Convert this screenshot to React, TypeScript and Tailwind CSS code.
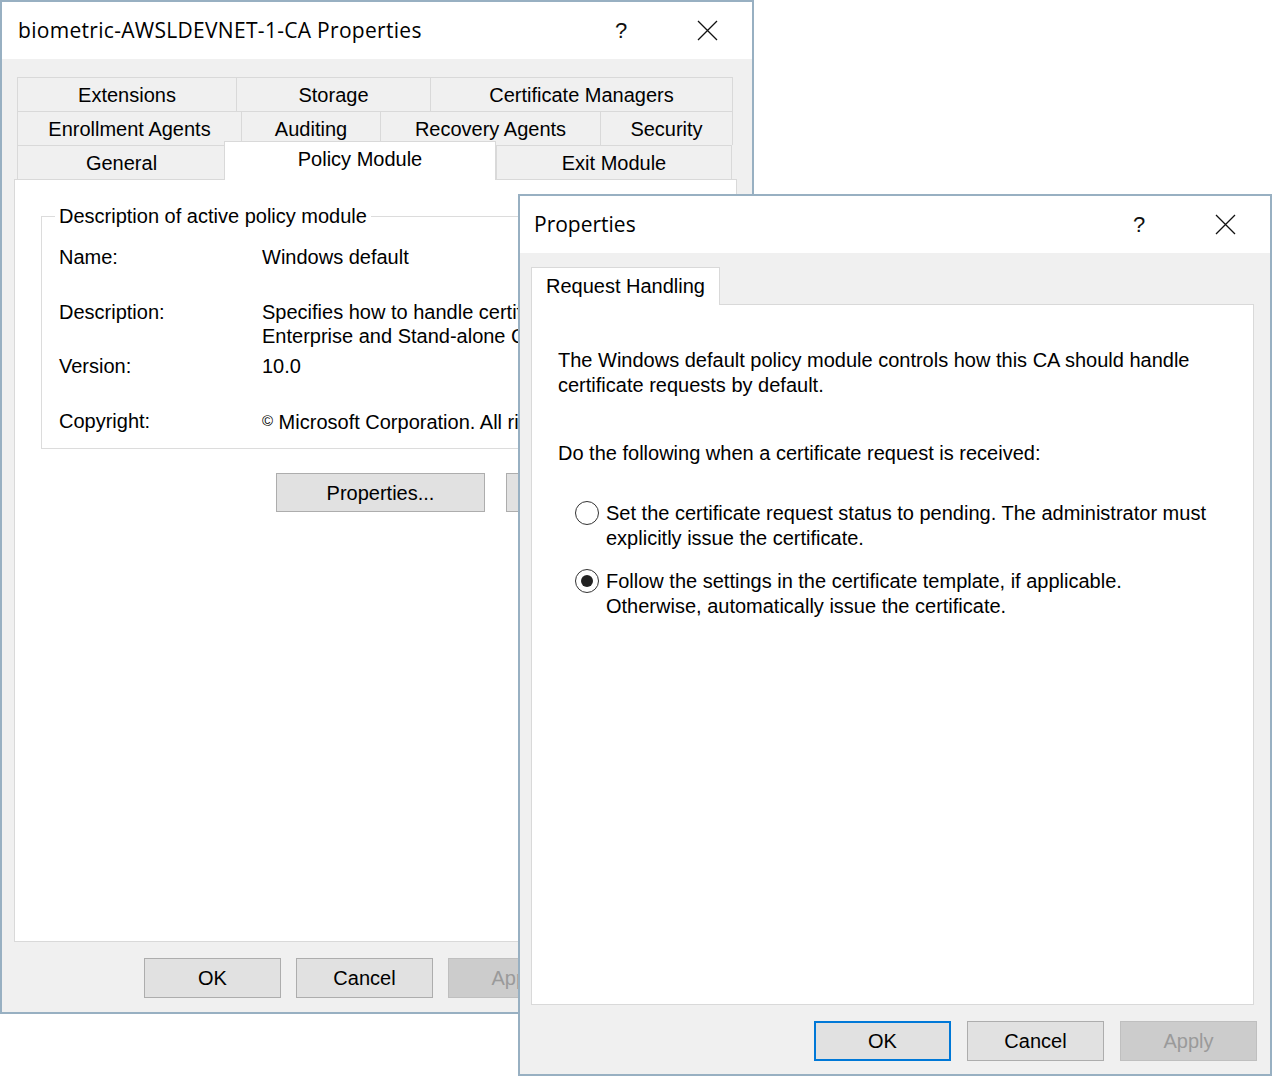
import React from 'react';

const ui = "font-['Liberation_Sans',Arial,sans-serif] text-[20px] text-black";
const titleFont = "font-['Open_Sans','Noto_Sans',sans-serif] text-[21px] text-black";

function CaptionButtons() {
  return (
    <div className="flex h-full pr-[2px]">
      <div className="w-[86px] flex items-center justify-center">
        <span className="font-['Liberation_Sans',sans-serif] text-[22px] font-light text-[#111]">?</span>
      </div>
      <div className="w-[86px] flex items-center justify-center">
        <svg width="21" height="21" viewBox="0 0 21 21">
          <path d="M1 1 L20 20 M20 1 L1 20" stroke="#111" strokeWidth="1.3" fill="none" />
        </svg>
      </div>
    </div>
  );
}

function TitleBar({ title, height, pad }: { title: string; height: string; pad: string }) {
  return (
    <div className={`${height} bg-white flex items-center justify-between shrink-0`}>
      <span className={`${titleFont} ${pad}`}>{title}</span>
      <CaptionButtons />
    </div>
  );
}

function Button({ label, variant = 'normal' }: { label: string; variant?: 'normal' | 'default' | 'disabled' }) {
  const styles = {
    normal: 'border border-[#adadad] bg-[#e1e1e1] text-black',
    default: 'border-2 border-[#0078d7] bg-[#e1e1e1] text-black',
    disabled: 'border border-[#bfbfbf] bg-[#cccccc] text-[#9a9a9a]',
  }[variant];
  return (
    <div className={`w-[137px] h-[40px] flex items-center justify-center shrink-0 font-['Liberation_Sans',Arial,sans-serif] text-[20px] ${styles}`}>
      {label}
    </div>
  );
}

type Tab = { label: string; w: string; selected?: boolean };

const tabRows: Tab[][] = [
  [
    { label: 'Extensions', w: 'w-[219px]' },
    { label: 'Storage', w: 'w-[194px]' },
    { label: 'Certificate Managers', w: 'w-[303px]' },
  ],
  [
    { label: 'Enrollment Agents', w: 'w-[224px]' },
    { label: 'Auditing', w: 'w-[139px]' },
    { label: 'Recovery Agents', w: 'w-[220px]' },
    { label: 'Security', w: 'w-[133px]' },
  ],
  [
    { label: 'General', w: 'w-[208px]' },
    { label: 'Policy Module', w: 'w-[272px]', selected: true },
    { label: 'Exit Module', w: 'w-[236px]' },
  ],
];

function TabRows() {
  return (
    <div className="ml-[3px] flex flex-col">
      {tabRows.map((row, ri) => (
        <div key={ri} className="flex items-end h-[34px]">
          {row.map((t, ti) =>
            t.selected ? (
              <div
                key={t.label}
                className={`${t.w} h-[39px] -mb-px -ml-px relative z-10 bg-white border-t border-l border-r border-[#d9d9d9] flex items-center justify-center pb-[4px] ${ui}`}
              >
                {t.label}
              </div>
            ) : (
              <div
                key={t.label}
                className={`${t.w} h-[34px] border-t border-l border-[#d9d9d9] bg-[#f0f0f0] flex items-center justify-center ${ti === row.length - 1 ? 'border-r' : ''} ${ui}`}
              >
                {t.label}
              </div>
            )
          )}
        </div>
      ))}
    </div>
  );
}

function CaWindow() {
  return (
    <div className="absolute left-0 top-0 w-[754px] h-[1014px] border-2 border-[#98b0c2] bg-[#f0f0f0] flex flex-col">
      <TitleBar title="biometric-AWSLDEVNET-1-CA Properties" height="h-[57px]" pad="pl-[16px] tracking-[0.3px]" />
      <div className="flex flex-col px-[12px] pt-[18px]">
        <TabRows />
        <div className="w-[723px] h-[763px] bg-white border border-[#d9d9d9] overflow-hidden">
          <fieldset className="ml-[26px] mt-[24px] w-[670px] border border-[#dcdcdc] pb-[14px]">
            <legend className={`ml-[13px] px-[4px] leading-[24px] ${ui}`}>Description of active policy module</legend>
            <div className={`pl-[17px] mt-[17px] leading-[24px] whitespace-nowrap ${ui}`}>
              <div className="flex">
                <div className="w-[203px]">Name:</div>
                <div>Windows default</div>
              </div>
              <div className="flex mt-[31px]">
                <div className="w-[203px]">Description:</div>
                <div>
                  Specifies how to handle certificate requests for
                  <br />
                  Enterprise and Stand-alone Certification Authorities
                </div>
              </div>
              <div className="flex mt-[6px]">
                <div className="w-[203px]">Version:</div>
                <div>10.0</div>
              </div>
              <div className="flex mt-[31px]">
                <div className="w-[203px]">Copyright:</div>
                <div>
                  <span className="text-[15px] align-[3px]">©</span> Microsoft Corporation. All rights reserved.
                </div>
              </div>
            </div>
          </fieldset>
          <div className="flex gap-[21px] ml-[261px] mt-[24px]">
            <div className={`w-[209px] h-[39px] border border-[#adadad] bg-[#e1e1e1] flex items-center justify-center ${ui}`}>
              Properties...
            </div>
            <div className={`w-[209px] h-[39px] border border-[#adadad] bg-[#e1e1e1] flex items-center justify-center ${ui}`}>
              Select...
            </div>
          </div>
        </div>
        <div className="w-[723px] flex justify-end gap-[15px] mt-[16px]">
          <Button label="OK" />
          <Button label="Cancel" />
          <Button label="Apply" variant="disabled" />
          <Button label="Help" />
        </div>
      </div>
    </div>
  );
}

function Radio({ checked }: { checked?: boolean }) {
  return (
    <div className="w-[24px] h-[24px] rounded-full border-[1.5px] border-[#333] bg-white flex items-center justify-center shrink-0">
      {checked && <div className="w-[12px] h-[12px] rounded-full bg-[#222]" />}
    </div>
  );
}

function PolicyPropertiesWindow() {
  return (
    <div className="absolute left-[518px] top-[194px] w-[754px] h-[882px] border-2 border-[#98b0c2] bg-[#f0f0f0] flex flex-col">
      <TitleBar title="Properties" height="h-[57px]" pad="pl-[14px]" />
      <div className="flex flex-col px-[11px] pt-[14px]">
        <div className={`w-[189px] h-[38px] -mb-px relative z-10 bg-white border-t border-l border-r border-[#d9d9d9] flex items-center pl-[14px] pb-[2px] ${ui}`}>
          Request Handling
        </div>
        <div className={`w-[723px] h-[701px] bg-white border border-[#d9d9d9] pl-[26px] pt-[43px] leading-[25px] ${ui}`}>
          <p>
            The Windows default policy module controls how this CA should handle
            <br />
            certificate requests by default.
          </p>
          <p className="mt-[43px]">Do the following when a certificate request is received:</p>
          <div className="flex items-start gap-[7px] ml-[17px] mt-[35px]">
            <Radio />
            <p>
              Set the certificate request status to pending. The administrator must
              <br />
              explicitly issue the certificate.
            </p>
          </div>
          <div className="flex items-start gap-[7px] ml-[17px] mt-[18px]">
            <Radio checked />
            <p>
              Follow the settings in the certificate template, if applicable.
              <br />
              Otherwise, automatically issue the certificate.
            </p>
          </div>
        </div>
        <div className="flex justify-end gap-[16px] mt-[16px] pr-[2px]">
          <Button label="OK" variant="default" />
          <Button label="Cancel" />
          <Button label="Apply" variant="disabled" />
        </div>
      </div>
    </div>
  );
}

export default function App() {
  return (
    <div className="relative w-[1272px] h-[1076px] bg-white overflow-hidden">
      <CaWindow />
      <PolicyPropertiesWindow />
    </div>
  );
}
